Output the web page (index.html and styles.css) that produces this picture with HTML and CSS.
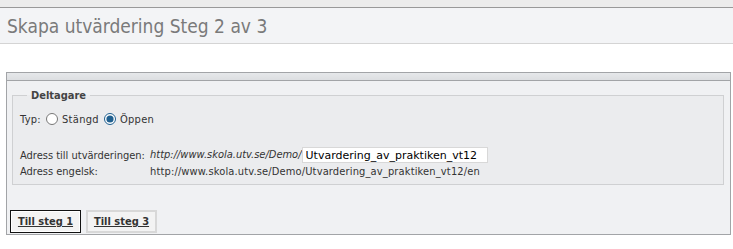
FILE: index.html
```html
<!DOCTYPE html>
<html lang="sv">
<head>
    <meta charset="UTF-8">
    <title>Skapa utvärdering</title>
    <link rel="stylesheet" href="styles.css">
</head>
<body>
    <div class="topbar"></div>
    <div class="header">
        <h1>Skapa utvärdering Steg 2 av 3</h1>
    </div>
    <div class="panel">
        <div class="panel-head"></div>
        <div class="panel-body">
            <fieldset class="group">
                <legend>Deltagare</legend>
                <div class="row typ">
                    Typ:
                    <label><input type="radio" name="typ"> Stängd</label>
                    <label><input type="radio" name="typ" checked> Öppen</label>
                </div>
                <div class="row addr">
                    <span class="lbl">Adress till utvärderingen:</span>
                    <span class="url"><i>http://www.skola.utv.se/Demo/</i><input type="text" class="slug" value="Utvardering_av_praktiken_vt12"></span>
                </div>
                <div class="row addr">
                    <span class="lbl">Adress engelsk:</span>
                    <span class="url en">http://www.skola.utv.se/Demo/Utvardering_av_praktiken_vt12/en</span>
                </div>
            </fieldset>
            <div class="buttons">
                <button class="active">Till steg 1</button>
                <button>Till steg 3</button>
            </div>
        </div>
    </div>
</body>
</html>
```

FILE: styles.css
```css
body {
    margin: 0;
    font-family: "DejaVu Sans Condensed", "DejaVu Sans", sans-serif;
    font-size: 11px;
    color: #333;
    background: #fff;
}
.topbar {
    height: 7px;
    background: #ececec;
    border-bottom: 1px solid #999;
}
.header {
    background: #f3f4f6;
    border-bottom: 1px solid #d4d4d4;
    height: 35px;
    padding-left: 7px;
}
.header h1 {
    margin: 0;
    font-family: "DejaVu Sans Condensed", sans-serif;
    font-weight: normal;
    font-size: 19px;
    line-height: 36px;
    color: #7a7a7a;
}
.panel {
    margin: 28px 2px 0 6px;
    border: 1px solid #a2a4a7;
    background: #f0f1f3;
}
.panel-head {
    height: 7px;
    background: linear-gradient(#e6e8ea, #dcdee1);
    border-bottom: 1px solid #a2a4a7;
}
.panel-body {
    padding: 8px 6px 1px 3px;
}
.group {
    margin: 0 0 0 2px;
    padding: 9px 7px 5px;
    border: 1px solid #cfd0d2;
    background: #ebecee;
}
.group legend {
    font-weight: bold;
    color: #444;
    padding: 0 4px;
    margin-left: 7px;
}
.row {
    display: flex;
    align-items: center;
}
.typ {
    height: 16px;
    margin-bottom: 20px;
    letter-spacing: 0.3px;
}
.typ label {
    display: flex;
    align-items: center;
}
.typ input {
    margin: 0 4px 0 5px;
    width: 12px;
    height: 12px;
    accent-color: #1f5f8f;
}
.addr {
    height: 16px;
}
.lbl {
    width: 130px;
}
.url.en {
    letter-spacing: 0.15px;
}
.slug {
    width: 178px;
    height: 14px;
    padding: 0 3px;
    margin: 0;
    border: 1px solid #d8d8d8;
    background: #fff;
    font-family: "DejaVu Sans", sans-serif;
    font-size: 11px;
    color: #000;
    vertical-align: middle;
}
.buttons {
    display: flex;
    gap: 5px;
    margin-top: 25px;
    padding-left: 0;
}
.buttons button {
    width: 71px;
    height: 23px;
    padding: 0;
    white-space: nowrap;
    border: 2px solid #d8d8d8;
    background: #f3f3f3;
    font-family: inherit;
    font-size: 11px;
    font-weight: bold;
    color: #333;
    text-decoration: underline;
    cursor: pointer;
}
.buttons button.active {
    border-color: #111;
    border-width: 1px;
    box-shadow: inset 0 0 0 1px #fff;
}
```
